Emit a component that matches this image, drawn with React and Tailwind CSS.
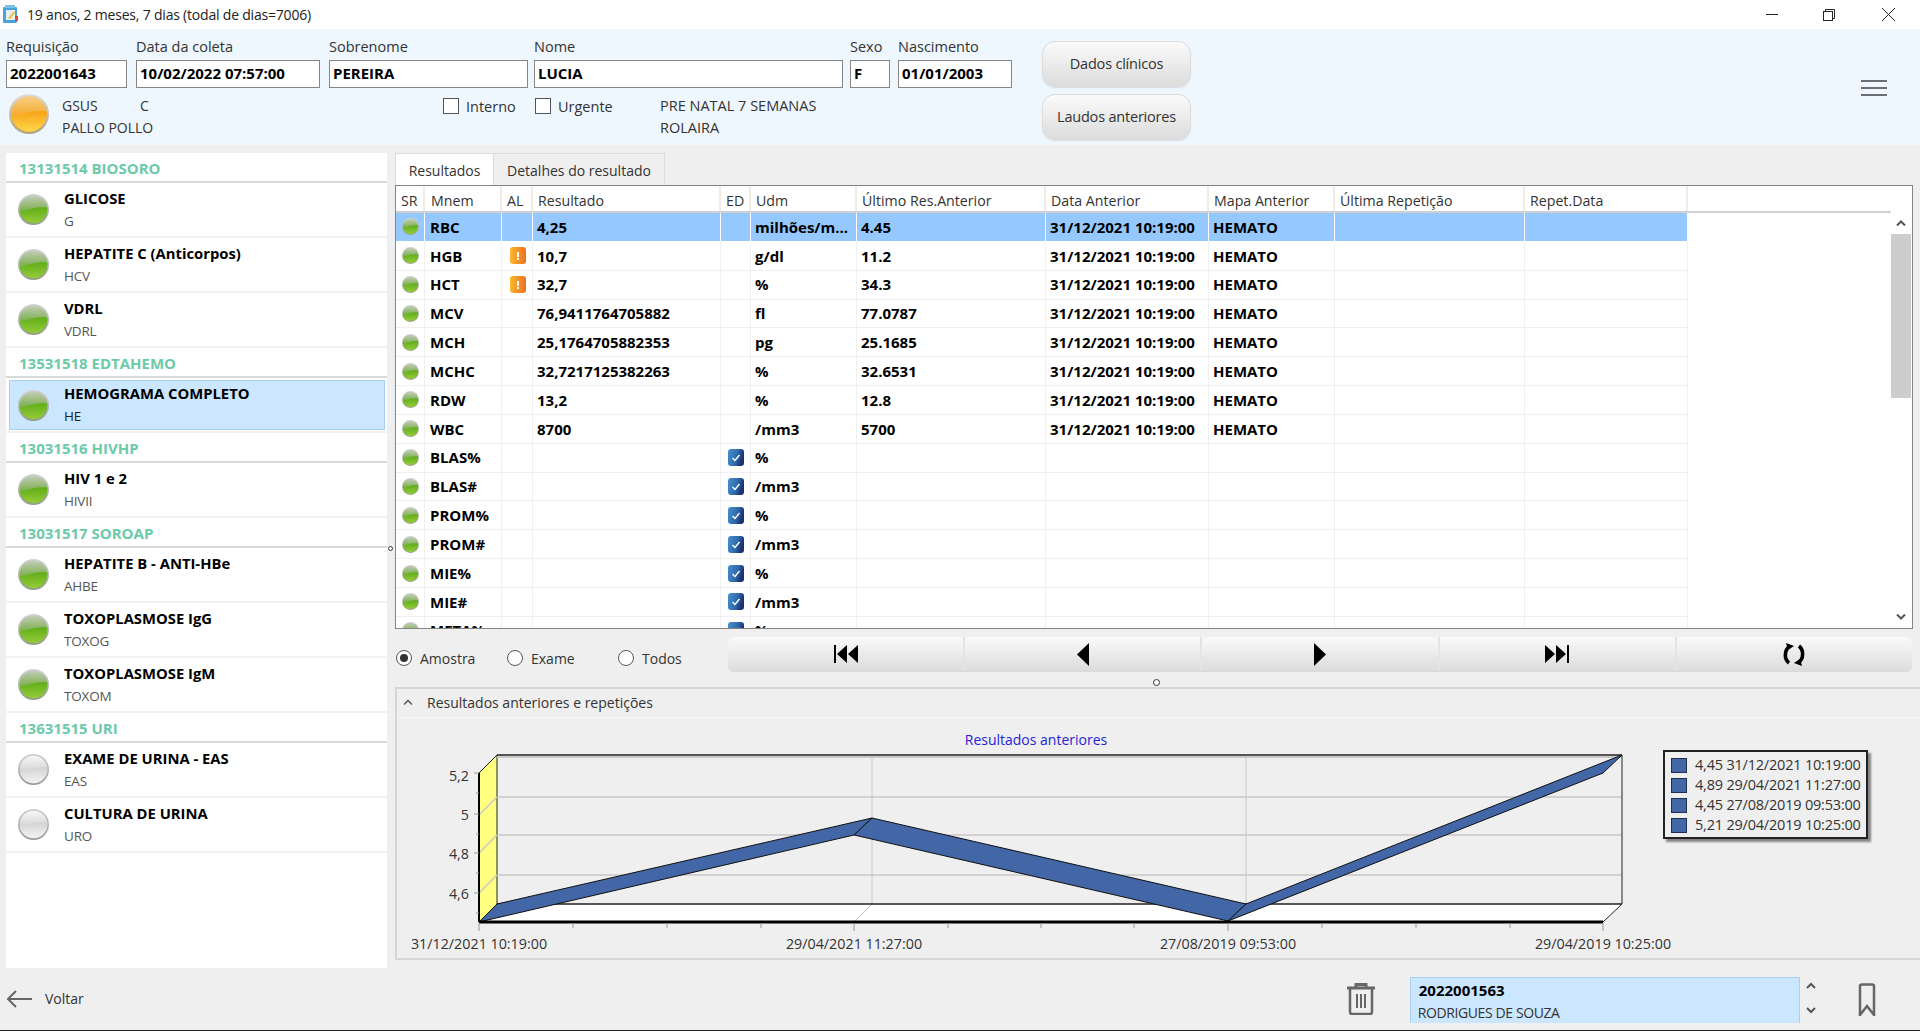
import React from "react";

const VARIANTS = {
  green: { ring: ["#d2d2d2", "#949c8e"], top: ["#c2cdb6", "#7cb04e"], low: ["#5fad18", "#96cc3a"] },
  gray: { ring: ["#cfcfcf", "#9a9a9a"], top: ["#f6f6f6", "#d6d6d6"], low: ["#d2d2d2", "#f3f3f3"] },
  orange: { ring: ["#dedcd8", "#b0a284"], top: ["#f6cd85", "#f6ab2c"], low: ["#f7a116", "#ffd84a"] },
};

function Orb({ kind = "green", size = 31 }) {
  const v = VARIANTS[kind];
  return (
    <svg width={size} height={size} viewBox="0 0 40 40" className="shrink-0">
      <defs>
        <linearGradient id={`ring-${kind}`} x1="0" y1="0" x2="0" y2="1">
          <stop offset="0" stopColor={v.ring[0]} />
          <stop offset="1" stopColor={v.ring[1]} />
        </linearGradient>
        <linearGradient id={`top-${kind}`} x1="0" y1="0" x2="0" y2="1">
          <stop offset="0" stopColor={v.top[0]} />
          <stop offset="0.55" stopColor={v.top[1]} />
        </linearGradient>
        <linearGradient id={`low-${kind}`} x1="0" y1="0" x2="0" y2="1">
          <stop offset="0" stopColor={v.low[0]} />
          <stop offset="1" stopColor={v.low[1]} />
        </linearGradient>
      </defs>
      <circle cx="20" cy="20" r="20" fill={`url(#ring-${kind})`} />
      <circle cx="20" cy="20" r="17.8" fill={`url(#top-${kind})`} />
      <path d="M2.3 22 C 12 22, 22 15, 37.7 17.5 A 17.8 17.8 0 0 1 2.3 22 Z" fill={`url(#low-${kind})`} />
    </svg>
  );
}

function AlertIcon() {
  return (
    <svg width="16" height="17" viewBox="0 0 16 17">
      <defs>
        <linearGradient id="al" x1="0" y1="0" x2="1" y2="0">
          <stop offset="0" stopColor="#fcb92c" />
          <stop offset="1" stopColor="#ee6f22" />
        </linearGradient>
      </defs>
      <rect width="16" height="17" rx="3" fill="url(#al)" />
      <rect x="7" y="5" width="2" height="5" fill="#fff" />
      <rect x="7" y="11" width="2" height="2" fill="#fff" />
    </svg>
  );
}

function EdIcon() {
  return (
    <svg width="16" height="17" viewBox="0 0 16 17">
      <defs>
        <linearGradient id="ed" x1="0" y1="0" x2="1" y2="0.3">
          <stop offset="0" stopColor="#4a90cf" />
          <stop offset="0.6" stopColor="#2e6cae" />
          <stop offset="1" stopColor="#1c2f6e" />
        </linearGradient>
      </defs>
      <rect width="16" height="17" rx="3" fill="url(#ed)" />
      <path d="M4.5 9 L7 11.5 L11.5 6" fill="none" stroke="#fff" strokeWidth="1.4" />
    </svg>
  );
}

const COLS = [29, 77, 31, 188, 30, 106, 189, 163, 126, 190, 163];
const HEAD = ["SR", "Mnem", "AL", "Resultado", "ED", "Udm", "Último Res.Anterior", "Data Anterior", "Mapa Anterior", "Última Repetição", "Repet.Data"];
const D = "31/12/2021 10:19:00";
const ROWS = [
  ["RBC", "", "4,25", "", "milhões/m...", "4.45", D, "HEMATO"],
  ["HGB", "a", "10,7", "", "g/dl", "11.2", D, "HEMATO"],
  ["HCT", "a", "32,7", "", "%", "34.3", D, "HEMATO"],
  ["MCV", "", "76,9411764705882", "", "fl", "77.0787", D, "HEMATO"],
  ["MCH", "", "25,1764705882353", "", "pg", "25.1685", D, "HEMATO"],
  ["MCHC", "", "32,7217125382263", "", "%", "32.6531", D, "HEMATO"],
  ["RDW", "", "13,2", "", "%", "12.8", D, "HEMATO"],
  ["WBC", "", "8700", "", "/mm3", "5700", D, "HEMATO"],
  ["BLAS%", "", "", "e", "%", "", "", ""],
  ["BLAS#", "", "", "e", "/mm3", "", "", ""],
  ["PROM%", "", "", "e", "%", "", "", ""],
  ["PROM#", "", "", "e", "/mm3", "", "", ""],
  ["MIE%", "", "", "e", "%", "", "", ""],
  ["MIE#", "", "", "e", "/mm3", "", "", ""],
  ["META%", "", "", "e", "%", "", "", ""],
];

const GROUPS = [
  ["13131514 BIOSORO", [["GLICOSE", "G"], ["HEPATITE C (Anticorpos)", "HCV"], ["VDRL", "VDRL"]]],
  ["13531518 EDTAHEMO", [["HEMOGRAMA COMPLETO", "HE", "sel"]]],
  ["13031516 HIVHP", [["HIV 1 e 2", "HIVII"]]],
  ["13031517 SOROAP", [["HEPATITE B - ANTI-HBe", "AHBE"], ["TOXOPLASMOSE IgG", "TOXOG"], ["TOXOPLASMOSE IgM", "TOXOM"]]],
  ["13631515 URI", [["EXAME DE URINA - EAS", "EAS", "gray"], ["CULTURA DE URINA", "URO", "gray"]]],
];

function Field({ label, value, w, className = "" }) {
  return (
    <div className={`flex flex-col shrink-0 ${className}`} style={{ width: w }}>
      <div className="h-[23px] leading-[19px] text-[14.5px] text-[#333] whitespace-nowrap">{label}</div>
      <div className="h-[28px] bg-white border border-[#858585] pl-[3px] leading-[25px] text-[15px] font-bold text-black">{value}</div>
    </div>
  );
}

function Check({ label, w }) {
  return (
    <div className="flex items-start shrink-0" style={{ width: w }}>
      <div className="w-[16px] h-[16px] mt-[4px] bg-white border border-[#555]" />
      <span className="ml-[7px] leading-[26px] text-[14.5px] text-[#333]">{label}</span>
    </div>
  );
}

function Radio({ label, on, w }) {
  return (
    <div className="flex items-center shrink-0" style={{ width: w }}>
      <div className="w-[16px] h-[16px] rounded-full bg-white border border-[#555] flex items-center justify-center shrink-0">
        {on && <div className="w-[8px] h-[8px] rounded-full bg-[#333]" />}
      </div>
      <span className="ml-[8px] text-[14px] text-[#333]">{label}</span>
    </div>
  );
}

function Big({ children }) {
  return (
    <button className="w-[149px] h-[46px] rounded-[13px] border border-[#dcdcdc] bg-gradient-to-b from-[#fbfbfb] to-[#dcdcdc] shadow-[0_1px_1px_rgba(0,0,0,0.1)] text-[14.5px] tracking-[-0.2px] text-[#333]">
      {children}
    </button>
  );
}

const NAV = [
  <svg key="a" width="24" height="18" viewBox="0 0 24 18"><rect width="2" height="18" /><path d="M13 0V18L3 9ZM24 0V18L14 9Z" /></svg>,
  <svg key="b" width="12" height="23" viewBox="0 0 12 23"><path d="M12 0V23L0 11.5Z" /></svg>,
  <svg key="c" width="12" height="23" viewBox="0 0 12 23"><path d="M0 0V23L12 11.5Z" /></svg>,
  <svg key="d" width="24" height="18" viewBox="0 0 24 18"><rect x="22" width="2" height="18" /><path d="M11 0V18L21 9ZM0 0V18L10 9Z" /></svg>,
  <svg key="e" width="22" height="23" viewBox="0 0 22 23" fill="none" stroke="#000" strokeWidth="3.6">
    <path d="M7 3 C 1 7, 1 16, 6 20" />
    <path d="M15 20 C 21 16, 21 7, 16 3" />
    <path d="M3 0 L11 3 L5 7Z" fill="#000" strokeWidth="0" />
    <path d="M19 23 L11 20 L17 16Z" fill="#000" strokeWidth="0" />
  </svg>,
];

function Chart() {
  const txt = { fontSize: 14.3, fill: "#333" };
  const band = "#4367a6";
  return (
    <svg width="1524" height="241" viewBox="396 718 1524 241" className="block">
      <text x="1035" y="745" textAnchor="middle" fontSize="14" fill="#2424d8">Resultados anteriores</text>
      <polygon points="478,922 496,904 1621,904 1602,922" fill="#fff" />
      <polygon points="478,773 496,755 496,904 478,922" fill="#ffff80" stroke="#222" strokeWidth="1" />
      {[797, 835, 875].map((y) => (
        <g key={y} stroke="#c8c8c8" strokeWidth="1.5" fill="none">
          <line x1="496" y1={y} x2="1621" y2={y} />
          <line x1="478" y1={y + 18} x2="496" y2={y} />
        </g>
      ))}
      <line x1="496" y1="757" x2="1621" y2="757" stroke="#c8c8c8" strokeWidth="2" />
      {[871, 1245].map((x) => (
        <g key={x} stroke="#c8c8c8" fill="none">
          <line x1={x} y1="757" x2={x} y2="904" />
          <line x1={x} y1="904" x2={x - 18} y2="922" />
        </g>
      ))}
      <line x1="496" y1="755" x2="1621" y2="755" stroke="#222" strokeWidth="1.5" />
      <line x1="1621" y1="755" x2="1621" y2="904" stroke="#222" />
      <line x1="496" y1="904" x2="1621" y2="904" stroke="#222" strokeWidth="1.5" />
      <line x1="1621" y1="904" x2="1602" y2="922" stroke="#222" />
      <polygon points="478,922 496,904 871,818 853,835" fill={band} stroke="#111" />
      <polygon points="853,835 871,818 1245,904 1227,921" fill={band} stroke="#111" />
      <polygon points="1227,921 1245,904 1621,755 1602,773" fill={band} stroke="#111" />
      <line x1="478" y1="922" x2="1602" y2="922" stroke="#000" strokeWidth="3" />
      <line x1="478" y1="773" x2="478" y2="922" stroke="#000" strokeWidth="2" />
      {[478, 572, 666, 760, 853, 947, 1040, 1133, 1227, 1321, 1415, 1509, 1602].map((x, i) => (
        <line key={x} x1={x} y1="923" x2={x} y2={i % 4 === 0 ? 931 : 928} stroke="#999" />
      ))}
      {[773, 793, 814, 834, 853, 873, 893, 913].map((y, i) => (
        <line key={y} x1={i % 2 === 0 ? 473 : 475} y1={y} x2="478" y2={y} stroke="#999" />
      ))}
      <text x="468" y="781" textAnchor="end" style={txt}>5,2</text>
      <text x="468" y="820" textAnchor="end" style={txt}>5</text>
      <text x="468" y="859" textAnchor="end" style={txt}>4,8</text>
      <text x="468" y="899" textAnchor="end" style={txt}>4,6</text>
      {[[478, "31/12/2021 10:19:00"], [853, "29/04/2021 11:27:00"], [1227, "27/08/2019 09:53:00"], [1602, "29/04/2019 10:25:00"]].map(([x, t]) => (
        <text key={t} x={x} y="949" textAnchor="middle" style={txt}>{t}</text>
      ))}
    </svg>
  );
}

const LEGEND = ["4,45 31/12/2021 10:19:00", "4,89 29/04/2021 11:27:00", "4,45 27/08/2019 09:53:00", "5,21 29/04/2019 10:25:00"];

export default function App() {
  return (
    <div className="w-[1920px] h-[1031px] overflow-hidden flex flex-col bg-[#efefef] text-[#333] font-['Open_Sans','Noto_Sans',sans-serif]">
      {/* title bar */}
      <div className="h-[29px] bg-white flex items-center shrink-0">
        <svg width="16" height="18" viewBox="0 0 16 18" className="ml-[3px] mt-[-1px]">
          <rect x="0" y="2" width="14" height="16" rx="1" fill="#4aa3d8" />
          <rect x="2" y="0" width="10" height="3" fill="#7cc0e6" />
          <rect x="3" y="5" width="9" height="10" fill="#e9eef2" />
          <path d="M5 13 L11 6 L12 8 L7 14Z" fill="#e8c53a" />
          <rect x="12" y="11" width="3" height="5" fill="#d9473a" />
        </svg>
        <span className="ml-[8px] text-[14px] tracking-[-0.2px] text-[#222]">19 anos, 2 meses, 7 dias (todal de dias=7006)</span>
        <div className="ml-auto flex items-center">
          <svg width="12" height="12" viewBox="0 0 12 12" className="mr-[45px]"><line x1="0" y1="5.5" x2="12" y2="5.5" stroke="#222" /></svg>
          <svg width="12" height="12" viewBox="0 0 12 12" className="mr-[47px]" fill="none" stroke="#222"><rect x="0.5" y="2.5" width="9" height="9" /><path d="M2.5 2.5V0.5H11.5V9.5H9.5" /></svg>
          <svg width="13" height="13" viewBox="0 0 13 13" className="mr-[25px]" stroke="#222"><line x1="0" y1="0" x2="13" y2="13" /><line x1="13" y1="0" x2="0" y2="13" /></svg>
        </div>
      </div>

      {/* header */}
      <div className="h-[116px] bg-[#eef6fe] shrink-0 flex pl-[6px] relative">
        <div className="w-[1005px] pt-[8px] shrink-0">
          <div className="flex">
            <Field label="Requisição" value="2022001643" w={121} />
            <Field label="Data da coleta" value="10/02/2022 07:57:00" w={184} className="ml-[9px]" />
            <Field label="Sobrenome" value="PEREIRA" w={199} className="ml-[9px]" />
            <Field label="Nome" value="LUCIA" w={309} className="ml-[6px]" />
            <Field label="Sexo" value="F" w={40} className="ml-[7px]" />
            <Field label="Nascimento" value="01/01/2003" w={114} className="ml-[8px]" />
          </div>
          <div className="flex mt-[6px]">
            <div className="ml-[3px] w-[53px] shrink-0"><Orb kind="orange" size={40} /></div>
            <div className="w-[381px] pt-[1px] text-[14px] leading-[22px] text-[#333] shrink-0">
              <div className="flex"><span className="w-[78px]">GSUS</span><span>C</span></div>
              <div>PALLO POLLO</div>
            </div>
            <Check label="Interno" w={92} />
            <Check label="Urgente" w={125} />
            <div className="pt-[1px] text-[14.5px] leading-[22px] text-[#333]">
              <div>PRE NATAL 7 SEMANAS</div>
              <div>ROLAIRA</div>
            </div>
          </div>
        </div>
        <div className="ml-[31px] pt-[12px] flex flex-col gap-[7px] shrink-0">
          <Big>Dados clínicos</Big>
          <Big>Laudos anteriores</Big>
        </div>
        <div className="ml-[670px] mt-[51px] w-[26px] flex flex-col gap-[5px] shrink-0">
          <div className="h-[2px] bg-[#6b6f73]" />
          <div className="h-[2px] bg-[#6b6f73]" />
          <div className="h-[2px] bg-[#6b6f73]" />
        </div>
      </div>

      {/* body */}
      <div className="h-[823px] shrink-0 flex relative pt-[8px]">
        {/* left list */}
        <div className="ml-[6px] w-[381px] h-[815px] bg-white shrink-0 overflow-hidden">
          {GROUPS.map(([g, items]) => (
            <div key={g}>
              <div className="h-[30px] border-b-2 border-[#d9d9d9] pl-[13px] leading-[30px] text-[15px] font-bold text-[#6ccaa9]">{g}</div>
              {items.map(([n, s, f]) => (
                <div key={n} className={`h-[55px] border-b-2 border-[#f2f2f2] ${f === "sel" ? "pl-[3px] pr-[2px] pt-[2px] pb-[1px]" : "pl-[3px]"}`}>
                  <div className={`flex items-center ${f === "sel" ? "h-[50px] bg-[#cbe6ff] border border-[#a9cfee] pl-[8px]" : "h-[53px] pl-[9px]"}`}>
                    <Orb kind={f === "gray" ? "gray" : "green"} />
                    <div className="ml-[15px]">
                      <div className="text-[14.8px] font-bold leading-[23px] text-black">{n}</div>
                      <div className={`text-[13.5px] tracking-[-0.2px] leading-[23px] ${f === "sel" ? "text-[#222]" : "text-[#555]"}`}>{s}</div>
                    </div>
                  </div>
                </div>
              ))}
            </div>
          ))}
        </div>

        <div className="absolute left-[388px] top-[401px] w-[5px] h-[5px] rounded-full border border-[#333] bg-white" />

        {/* right */}
        <div className="ml-[8px] w-[1518px] shrink-0 flex flex-col">
          <div className="h-[32px] flex shrink-0">
            <div className="w-[99px] bg-white border-t border-x border-[#dcdcdc] text-center leading-[33px] text-[14px] text-[#333]">Resultados</div>
            <div className="w-[171px] border-t border-r border-[#dcdcdc] text-center leading-[33px] text-[14px] text-[#333] whitespace-nowrap">Detalhes do resultado</div>
          </div>
          <div className="h-[444px] w-[1518px] bg-white border border-[#858585] flex relative overflow-hidden shrink-0">
            <div className="w-[1496px] shrink-0">
              <div className="h-[27px] flex border-b-2 border-[#d0d0d0] w-[1495px]">
                {COLS.map((w, i) => (
                  <div key={i} style={{ width: w }} className={`${i === 1 ? "pl-[6px]" : "pl-[5px]"} leading-[30px] text-[14.2px] text-[#333] border-r-2 border-[#f3ece2] shrink-0 whitespace-nowrap`}>{HEAD[i]}</div>
                ))}
              </div>
              {ROWS.map((r, idx) => {
                const sel = idx === 0;
                const sep = sel ? "border-white" : "border-[#f0f0f0]";
                const cells = r.concat(["", ""]);
                return (
                  <div key={r[0]} className={`h-[28.85px] flex border-b ${sep} w-[1292px] ${sel ? "bg-[#94c8fe]" : ""}`}>
                    <div style={{ width: COLS[0] }} className={`shrink-0 border-r ${sep} flex items-center justify-center`}><Orb size={17} /></div>
                    {COLS.slice(1).map((w, i) => {
                      const c = cells[i];
                      const pad = c === "a" ? "pl-[8px]" : c === "e" ? "pl-[7px]" : i === 0 ? "pl-[5px]" : "pl-[4px]";
                      return (
                        <div key={i} style={{ width: w }} className={`shrink-0 border-r ${sep} ${pad} flex items-center text-[15px] font-bold text-black whitespace-nowrap overflow-hidden`}>
                          {c === "a" ? <AlertIcon /> : c === "e" ? <EdIcon /> : c}
                        </div>
                      );
                    })}
                  </div>
                );
              })}
            </div>
            {/* scrollbar */}
            <div className="absolute right-[1px] top-[27px] bottom-0 w-[20px] flex flex-col items-center bg-white">
              <svg width="10" height="6" viewBox="0 0 10 6" className="mt-[7px]" fill="none" stroke="#555" strokeWidth="2"><path d="M1 5.5 L5 1.5 L9 5.5" /></svg>
              <div className="w-[20px] h-[164px] bg-[#cdcdcd] mt-[8px]" />
              <svg width="10" height="6" viewBox="0 0 10 6" className="mt-auto mb-[8px]" fill="none" stroke="#555" strokeWidth="2"><path d="M1 .5 L5 4.5 L9 .5" /></svg>
            </div>
          </div>

          {/* controls */}
          <div className="h-[58px] shrink-0 flex pt-[8px] relative">
            <div className="flex items-center h-[42px] pl-[1px] w-[333px] shrink-0">
              <Radio label="Amostra" on w={111} />
              <Radio label="Exame" w={111} />
              <Radio label="Todos" w={90} />
            </div>
            <div className="w-[1184px] h-[34px] flex rounded-[6px] bg-gradient-to-b from-[#fafafa] to-[#dcdcdc] shadow-[0_1px_1px_rgba(0,0,0,0.1)]">
              {NAV.map((ic, i) => (
                <div key={i} className={`flex-1 flex items-center justify-center ${i < 4 ? "border-r-2 border-[#e4e4e4]" : ""}`}>{ic}</div>
              ))}
            </div>
            <div className="absolute left-[758px] top-[50px] w-[7px] h-[7px] rounded-full border border-[#333] bg-white" />
          </div>

          {/* expander */}
          <div className="w-[1525px] h-[273px] shrink-0 border-t-2 border-l-2 border-b-2 border-[#d6d6d6] relative">
            <div className="h-[29px] flex items-center border-b border-[#f7f7f7]">
              <svg width="10" height="6" viewBox="0 0 10 6" className="ml-[6px] mt-[-2px]" fill="none" stroke="#555" strokeWidth="1.5"><path d="M1 5.5 L5 1.5 L9 5.5" /></svg>
              <span className="ml-[14px] mt-[-2px] text-[14px] text-[#333]">Resultados anteriores e repetições</span>
            </div>
            <Chart />
            <div className="absolute left-[1266px] top-[61px] w-[205px] h-[89px] border-2 border-[#222] bg-[#efefef] shadow-[3px_3px_2px_rgba(0,0,0,0.45)] pl-[6px] pt-[3px]">
              {LEGEND.map((t) => (
                <div key={t} className="h-[20px] flex items-center">
                  <div className="w-[16px] h-[15px] bg-[#4367a6] border border-[#1f2f50] shrink-0" />
                  <span className="ml-[8px] text-[14.5px] tracking-[-0.2px] text-[#333] whitespace-nowrap">{t}</span>
                </div>
              ))}
            </div>
          </div>
        </div>
      </div>

      {/* bottom */}
      <div className="h-[63px] shrink-0 border-b border-[#222] flex items-start relative">
        <svg width="26" height="20" viewBox="0 0 26 20" className="ml-[6px] mt-[21px]" fill="none" stroke="#666" strokeWidth="2"><path d="M26 10H2M10 2L2 10L10 18" /></svg>
        <span className="ml-[13px] mt-[20px] text-[14px] text-[#333]">Voltar</span>
        <svg width="30" height="32" viewBox="0 0 30 32" className="ml-[1262px] mt-[15px]" fill="none" stroke="#666" strokeWidth="2">
          <path d="M1 5H29M10 4V1.5H20V4" strokeWidth="3" />
          <path d="M4 6V29 Q4 31 6 31H24 Q26 31 26 29V6" strokeWidth="2.5" />
          <path d="M11 11V25M15 11V25M19 11V25" />
        </svg>
        <div className="ml-[34px] mt-[9px] w-[390px] h-[46px] bg-[#cbe6ff] border-x border-t border-[#a9cfee] pl-[8px] overflow-hidden">
          <div className="text-[15px] font-bold text-black leading-[25px]">2022001563</div>
          <div className="text-[14px] tracking-[-0.4px] text-[#333] leading-[20px] ml-[-1px]">RODRIGUES DE SOUZA</div>
        </div>
        <div className="ml-[6px] mt-[14px] flex flex-col gap-[18px]">
          <svg width="10" height="7" viewBox="0 0 10 7" fill="none" stroke="#555" strokeWidth="2"><path d="M1 6 L5 2 L9 6" /></svg>
          <svg width="10" height="7" viewBox="0 0 10 7" fill="none" stroke="#555" strokeWidth="2"><path d="M1 1 L5 5 L9 1" /></svg>
        </div>
        <svg width="18" height="33" viewBox="0 0 18 33" className="ml-[42px] mt-[15px]" fill="none" stroke="#666" strokeWidth="2.5">
          <path d="M2 32V3 Q2 1.5 4 1.5H14 Q16 1.5 16 3V32 L9 23Z" />
        </svg>
      </div>
    </div>
  );
}
